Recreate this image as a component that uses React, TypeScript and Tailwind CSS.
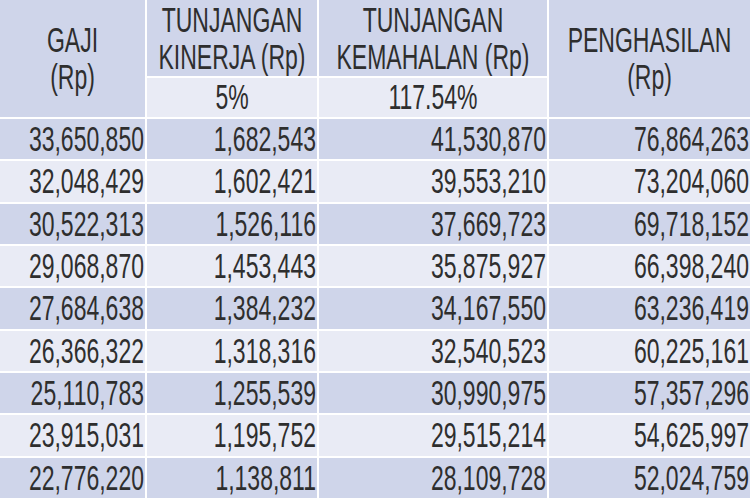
import React from "react";

const rows: [string, string, string, string][] = [
  ["33,650,850", "1,682,543", "41,530,870", "76,864,263"],
  ["32,048,429", "1,602,421", "39,553,210", "73,204,060"],
  ["30,522,313", "1,526,116", "37,669,723", "69,718,152"],
  ["29,068,870", "1,453,443", "35,875,927", "66,398,240"],
  ["27,684,638", "1,384,232", "34,167,550", "63,236,419"],
  ["26,366,322", "1,318,316", "32,540,523", "60,225,161"],
  ["25,110,783", "1,255,539", "30,990,975", "57,357,296"],
  ["23,915,031", "1,195,752", "29,515,214", "54,625,997"],
  ["22,776,220", "1,138,811", "28,109,728", "52,024,759"],
];

function T({ children }: { children: React.ReactNode }) {
  return (
    <span className="inline-block origin-center scale-y-[1.5] whitespace-nowrap">{children}</span>
  );
}

export default function App() {
  return (
    <div
      className="w-[750px] h-[500px] overflow-hidden bg-white text-[#2e2e2e] text-[23px] leading-[24.5px]"
      style={{ fontFamily: '"Liberation Sans", Arial, sans-serif' }}
    >
      <div className="grid grid-cols-[145px_170px_228px_1fr] grid-rows-[76px_39px] gap-[2px]">
        <div className="row-span-2 bg-[#cfd5ea] flex items-center justify-center text-center">
          <T>
            GAJI
            <br />
            (Rp)
          </T>
        </div>
        <div className="bg-[#cfd5ea] flex items-center justify-center text-center">
          <T>
            TUNJANGAN
            <br />
            KINERJA (Rp)
          </T>
        </div>
        <div className="bg-[#cfd5ea] flex items-center justify-center text-center">
          <T>
            TUNJANGAN
            <br />
            KEMAHALAN (Rp)
          </T>
        </div>
        <div className="row-span-2 bg-[#cfd5ea] flex items-center justify-center text-center">
          <T>
            PENGHASILAN
            <br />
            (Rp)
          </T>
        </div>
        <div className="bg-[#e9ebf5] flex items-center justify-center">
          <T>5%</T>
        </div>
        <div className="bg-[#e9ebf5] flex items-center justify-center">
          <T>117.54%</T>
        </div>
      </div>
      <div className="mt-[2px] grid grid-cols-[145px_170px_228px_1fr] auto-rows-[40.33px] gap-[2px]">
        {rows.map((r, i) =>
          r.map((v, j) => (
            <div
              key={`${i}-${j}`}
              className={`${i % 2 === 0 ? "bg-[#cfd5ea]" : "bg-[#e9ebf5]"} flex items-center justify-end pr-[1px]`}
            >
              <T>{v}</T>
            </div>
          ))
        )}
      </div>
    </div>
  );
}
